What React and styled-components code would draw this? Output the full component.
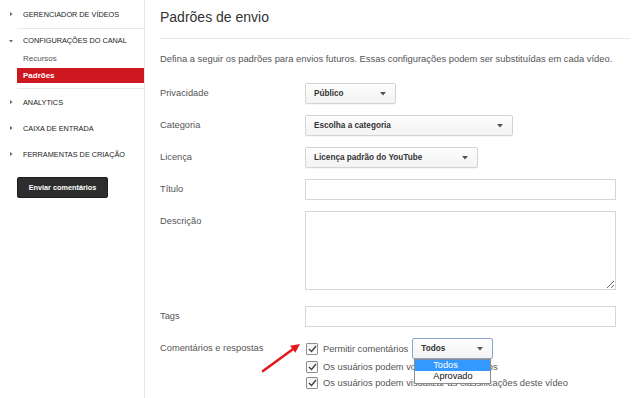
import React from "react";
import styled, { createGlobalStyle } from "styled-components";

const Global = createGlobalStyle`
  html, body { margin: 0; padding: 0; background: #fff; }
  body { font-family: "Liberation Sans", Arial, sans-serif; }
  * { box-sizing: border-box; }
`;

const Page = styled.div`
  position: relative;
  display: flex;
  width: 640px;
  height: 398px;
  overflow: hidden;
  background: #fff;
`;

const Sidebar = styled.nav`
  width: 145px;
  flex-shrink: 0;
  border-right: 1px solid #e6e6e6;
`;

const NavHeader = styled.div`
  display: flex;
  align-items: center;
  height: ${(p) => p.$h}px;
  padding-left: 9px;
  font-size: 7.3px;
  color: #222;
  white-space: nowrap;
`;

const ArrowBox = styled.span`
  display: inline-flex;
  align-items: center;
  width: 14px;
`;

const Divider = styled.div`
  height: 1px;
  background: #e8e8e8;
  margin-left: 17px;
`;

const SubItem = styled.div`
  display: flex;
  align-items: center;
  height: ${(p) => (p.$active ? 15 : 13)}px;
  margin: ${(p) => (p.$active ? "3px 0 5px 17px" : "0 0 0 17px")};
  padding-left: 6px;
  font-size: 8px;
  font-weight: ${(p) => (p.$active ? 700 : 400)};
  color: ${(p) => (p.$active ? "#fff" : "#555")};
  background: ${(p) => (p.$active ? "#cc181e" : "transparent")};
`;

const FeedbackButton = styled.button`
  display: flex;
  align-items: center;
  justify-content: center;
  margin: 10px 0 0 17px;
  width: 91px;
  height: 21px;
  padding: 0;
  border: 1px solid #1e1e1e;
  border-radius: 2px;
  background: #2d2d2d;
  color: #fff;
  font-family: inherit;
  font-weight: 700;
  font-size: 7.3px;
`;

const Main = styled.main`
  flex: 1;
  padding: 0 10px 0 15px;
`;

const Title = styled.h1`
  margin: 0;
  padding: 8px 0 12px;
  line-height: 18px;
  font-size: 14px;
  font-weight: 400;
  color: #333;
  border-bottom: 1px solid #e8e8e8;
`;

const Intro = styled.p`
  margin: 14px 0 0;
  line-height: 12px;
  font-size: 9.4px;
  color: #555;
  white-space: nowrap;
`;

const Form = styled.div`
  display: grid;
  grid-template-columns: 145px 311px;
  row-gap: 11px;
  margin-top: 18px;
`;

const Label = styled.div`
  padding-top: 5px;
  line-height: 11px;
  font-size: 9.3px;
  color: #555;
`;

const SelectBox = styled.div`
  position: relative;
  display: flex;
  align-items: center;
  justify-content: space-between;
  width: ${(p) => p.$w}px;
  height: 21px;
  padding: 0 9px 0 8px;
  border: 1px solid ${(p) => (p.$focus ? "#8aa6c8" : "#d3d3d3")};
  border-radius: 2px;
  background: linear-gradient(#fdfdfd, #f3f3f3);
  box-shadow: 0 1px 0 rgba(0, 0, 0, 0.04);
  font-size: 8.2px;
  font-weight: 700;
  color: #333;
  white-space: nowrap;
`;

const TextInput = styled.div`
  width: 311px;
  height: 21px;
  border: 1px solid #d6d6d6;
  background: #fff;
`;

const TextArea = styled.textarea`
  display: block;
  width: 311px;
  height: 79px;
  margin: 0 0 5px;
  border: 1px solid #d6d6d6;
  background: #fff;
  resize: both;
  outline: none;
`;

const Checks = styled.div`
  display: flex;
  flex-direction: column;
`;

const CheckRow = styled.div`
  display: flex;
  align-items: center;
  gap: 5px;
  height: ${(p) => p.$h}px;
  padding-left: 1px;
  font-size: 9.3px;
  color: #555;
  white-space: nowrap;
`;

const Box = styled.span`
  display: inline-flex;
  align-items: center;
  justify-content: center;
  width: 12px;
  height: 12px;
  border: 1px solid #8e8f8f;
  border-radius: 1px;
  background: linear-gradient(#f2f2f2, #fff);
`;

const InlineSelect = styled.div`
  margin-left: -1px;
`;

const DropList = styled.div`
  position: absolute;
  top: 20px;
  left: 1px;
  width: 77px;
  height: 25px;
  border: 1px solid #8a8a8a;
  background: #fff;
  font-weight: 400;
  z-index: 2;
`;

const Option = styled.div`
  height: 11px;
  line-height: 11px;
  padding-left: 18px;
  font-size: 9.2px;
  color: ${(p) => (p.$sel ? "#fff" : "#111")};
  background: ${(p) => (p.$sel ? "#3399ff" : "transparent")};
`;

const Annotation = styled.svg`
  position: absolute;
  left: 255px;
  top: 335px;
  pointer-events: none;
`;

const Caret = () => (
  <svg width="6" height="4" viewBox="0 0 6 4">
    <polygon points="0,0 6,0 3,3.5" fill="#555" />
  </svg>
);

const NavArrow = ({ open }) => (
  <ArrowBox>
    <svg width="4" height="4" viewBox="0 0 4 4">
      {open ? (
        <polygon points="0,1 4,1 2,3.5" fill="#666" />
      ) : (
        <polygon points="1,0 3.5,2 1,4" fill="#666" />
      )}
    </svg>
  </ArrowBox>
);

const Check = () => (
  <Box>
    <svg width="9" height="8" viewBox="0 0 9 8">
      <polyline points="1,4 3.5,6.5 8,1" fill="none" stroke="#3c3c3c" strokeWidth="1.3" />
    </svg>
  </Box>
);

const Select = ({ w, children, focus, list }) => (
  <SelectBox $w={w} $focus={focus}>
    <span>{children}</span>
    <Caret />
    {list}
  </SelectBox>
);

export default function App() {
  return (
    <Page>
      <Global />
      <Sidebar>
        <NavHeader $h={28}>
          <NavArrow />
          GERENCIADOR DE VÍDEOS
        </NavHeader>
        <Divider />
        <NavHeader $h={23}>
          <NavArrow open />
          CONFIGURAÇÕES DO CANAL
        </NavHeader>
        <SubItem>Recursos</SubItem>
        <SubItem $active>Padrões</SubItem>
        <Divider />
        <NavHeader $h={26}>
          <NavArrow />
          ANALYTICS
        </NavHeader>
        <NavHeader $h={26}>
          <NavArrow />
          CAIXA DE ENTRADA
        </NavHeader>
        <NavHeader $h={26}>
          <NavArrow />
          FERRAMENTAS DE CRIAÇÃO
        </NavHeader>
        <FeedbackButton>Enviar comentários</FeedbackButton>
      </Sidebar>

      <Main>
        <Title>Padrões de envio</Title>
        <Intro>
          Defina a seguir os padrões para envios futuros. Essas configurações podem ser substituídas em cada vídeo.
        </Intro>
        <Form>
          <Label>Privacidade</Label>
          <Select w={91}>Público</Select>

          <Label>Categoria</Label>
          <Select w={208}>Escolha a categoria</Select>

          <Label>Licença</Label>
          <Select w={173}>Licença padrão do YouTube</Select>

          <Label>Título</Label>
          <TextInput />

          <Label>Descrição</Label>
          <div>
            <TextArea />
          </div>

          <Label>Tags</Label>
          <TextInput />

          <Label>Comentários e respostas</Label>
          <Checks>
            <CheckRow $h={21}>
              <Check />
              Permitir comentários
              <InlineSelect>
                <Select
                  w={81}
                  focus
                  list={
                    <DropList>
                      <Option $sel>Todos</Option>
                      <Option>Aprovado</Option>
                    </DropList>
                  }
                >
                  Todos
                </Select>
              </InlineSelect>
            </CheckRow>
            <CheckRow $h={16}>
              <Check />
              Os usuários podem votar nos comentários
            </CheckRow>
            <CheckRow $h={16}>
              <Check />
              Os usuários podem visualizar as classificações deste vídeo
            </CheckRow>
          </Checks>
        </Form>
      </Main>

      <Annotation width="55" height="45" viewBox="0 0 55 45">
        <line x1="8" y1="36" x2="38.5" y2="13.8" stroke="#e3191c" strokeWidth="2.6" strokeLinecap="round" />
        <polygon points="45,9 40.3,17.8 35.1,10.8" fill="#e3191c" />
      </Annotation>
    </Page>
  );
}
